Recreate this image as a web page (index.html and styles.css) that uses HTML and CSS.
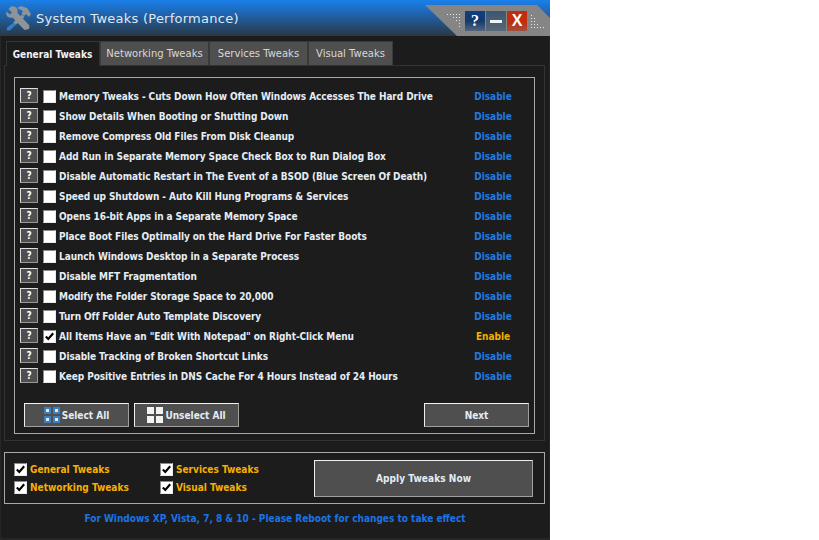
FILE: index.html
```html
<!DOCTYPE html>
<html lang="en">
<head>
<meta charset="utf-8">
<title>System Tweaks (Performance)</title>
<link rel="stylesheet" href="styles.css">
</head>
<body>
<div class="window">
  <header class="titlebar">
    <svg class="app-icon" width="26" height="26" viewBox="0 0 26 26">
      <path d="M6 1.5 L3.5 4 L7 7.5 L5 9.5 L1.5 6.5 Q0.5 10 3 12 Q5 13.2 7.5 12.5 L19.5 25 L24 24 L24.5 20.5 L12.5 8 Q13 4 10.5 2 Q8.5 1 6 1.5Z" fill="#8e9499"/>
      <path d="M12 3 L16 1 L22 3 L26 9 L24 12 L21 9 L19 11 L16.5 8.5 L18 6 Z" fill="#8e9499"/>
      <path d="M17 9.5 L19.5 12 L10.5 20 L8 17.5Z" fill="#8e9499"/>
      <path d="M9 17.5 L11 19.5 L5.5 25 Q3 26 2 25 Q1 23.5 2.5 22Z" fill="#2f7fc8"/>
    </svg>
    <span class="title">System Tweaks (Performance)</span>
    <svg class="chrome" width="127" height="36" viewBox="0 0 127 36">
      <path d="M2 5 H114 L127 18 V36 H34 Z" fill="#858585"/>
      <g fill="#e8e8e8">
        <rect x="24" y="14" width="1" height="1"/><rect x="27" y="14" width="1" height="1"/><rect x="30" y="14" width="1" height="1"/><rect x="33" y="14" width="1" height="1"/><rect x="36" y="14" width="1" height="1"/>
        <rect x="30" y="17" width="1" height="1"/><rect x="33" y="17" width="1" height="1"/><rect x="36" y="17" width="1" height="1"/>
        <rect x="33" y="20" width="1" height="1"/><rect x="36" y="20" width="1" height="1"/>
        <rect x="36" y="23" width="1" height="1"/><rect x="36" y="26" width="1" height="1"/>
        <rect x="108" y="15" width="1" height="1"/><rect x="108" y="18" width="1" height="1"/><rect x="111" y="18" width="1" height="1"/><rect x="108" y="21" width="1" height="1"/><rect x="111" y="21" width="1" height="1"/><rect x="108" y="24" width="1" height="1"/><rect x="111" y="24" width="1" height="1"/><rect x="114" y="24" width="1" height="1"/><rect x="108" y="27" width="1" height="1"/><rect x="111" y="27" width="1" height="1"/><rect x="114" y="27" width="1" height="1"/><rect x="117" y="27" width="1" height="1"/><rect x="120" y="27" width="1" height="1"/>
      </g>
    </svg>
    <div class="win-controls">
      <span class="win-btn win-help">?</span>
      <span class="win-btn win-min"><i class="min-bar"></i></span>
      <span class="win-btn win-close">X</span>
    </div>
  </header>

  <main class="content">
    <nav class="tabs">
      <span class="tab tab-active">General Tweaks</span>
      <span class="tab">Networking Tweaks</span>
      <span class="tab">Services Tweaks</span>
      <span class="tab">Visual Tweaks</span>
    </nav>
    <section class="panel">
      <div class="group">
        <ul class="rows">
          <li class="row"><span class="help">?</span><span class="check"></span><span class="label">Memory Tweaks - Cuts Down How Often Windows Accesses The Hard Drive</span><span class="state">Disable</span></li>
          <li class="row"><span class="help">?</span><span class="check"></span><span class="label">Show Details When Booting or Shutting Down</span><span class="state">Disable</span></li>
          <li class="row"><span class="help">?</span><span class="check"></span><span class="label">Remove Compress Old Files From Disk Cleanup</span><span class="state">Disable</span></li>
          <li class="row"><span class="help">?</span><span class="check"></span><span class="label">Add Run in Separate Memory Space Check Box to Run Dialog Box</span><span class="state">Disable</span></li>
          <li class="row"><span class="help">?</span><span class="check"></span><span class="label">Disable Automatic Restart in The Event of a BSOD (Blue Screen Of Death)</span><span class="state">Disable</span></li>
          <li class="row"><span class="help">?</span><span class="check"></span><span class="label">Speed up Shutdown - Auto Kill Hung Programs &amp; Services</span><span class="state">Disable</span></li>
          <li class="row"><span class="help">?</span><span class="check"></span><span class="label">Opens 16-bit Apps in a Separate Memory Space</span><span class="state">Disable</span></li>
          <li class="row"><span class="help">?</span><span class="check"></span><span class="label">Place Boot Files Optimally on the Hard Drive For Faster Boots</span><span class="state">Disable</span></li>
          <li class="row"><span class="help">?</span><span class="check"></span><span class="label">Launch Windows Desktop in a Separate Process</span><span class="state">Disable</span></li>
          <li class="row"><span class="help">?</span><span class="check"></span><span class="label">Disable MFT Fragmentation</span><span class="state">Disable</span></li>
          <li class="row"><span class="help">?</span><span class="check"></span><span class="label">Modify the Folder Storage Space to 20,000</span><span class="state">Disable</span></li>
          <li class="row"><span class="help">?</span><span class="check"></span><span class="label">Turn Off Folder Auto Template Discovery</span><span class="state">Disable</span></li>
          <li class="row"><span class="help">?</span><span class="check checked"><svg class="tick" width="9" height="9" viewBox="0 0 11 11"><path d="M1 5.5 L4 8.5 L10 1.5" fill="none" stroke="#000" stroke-width="2.6"/></svg></span><span class="label">All Items Have an "Edit With Notepad" on Right-Click Menu</span><span class="state state-on">Enable</span></li>
          <li class="row"><span class="help">?</span><span class="check"></span><span class="label">Disable Tracking of Broken Shortcut Links</span><span class="state">Disable</span></li>
          <li class="row"><span class="help">?</span><span class="check"></span><span class="label">Keep Positive Entries in DNS Cache For 4 Hours Instead of 24 Hours</span><span class="state">Disable</span></li>
        </ul>
        <div class="actions">
          <span class="btn"><svg class="grid-icon" width="16" height="16" viewBox="0 0 16 16"><path d="M0 0H7V7H0ZM9 0H16V7H9ZM0 9H7V16H0ZM9 9H16V16H9Z" fill="#3d7fbd"/><path d="M2 2H5V5H2ZM11 2H14V5H11ZM2 11H5V14H2ZM11 11H14V14H11Z" fill="#dce8f4"/></svg>Select All</span>
          <span class="btn"><svg class="grid-icon" width="16" height="16" viewBox="0 0 16 16"><path d="M0 0H7V7H0ZM9 0H16V7H9ZM0 9H7V16H0ZM9 9H16V16H9Z" fill="#f2f2f2"/></svg>Unselect All</span>
          <span class="btn btn-next">Next</span>
        </div>
      </div>
    </section>

    <section class="summary">
      <div class="summary-grid">
        <label class="sum-item"><span class="check checked"><svg class="tick" width="9" height="9" viewBox="0 0 11 11"><path d="M1 5.5 L4 8.5 L10 1.5" fill="none" stroke="#000" stroke-width="2.6"/></svg></span>General Tweaks</label>
        <label class="sum-item"><span class="check checked"><svg class="tick" width="9" height="9" viewBox="0 0 11 11"><path d="M1 5.5 L4 8.5 L10 1.5" fill="none" stroke="#000" stroke-width="2.6"/></svg></span>Services Tweaks</label>
        <label class="sum-item"><span class="check checked"><svg class="tick" width="9" height="9" viewBox="0 0 11 11"><path d="M1 5.5 L4 8.5 L10 1.5" fill="none" stroke="#000" stroke-width="2.6"/></svg></span>Networking Tweaks</label>
        <label class="sum-item"><span class="check checked"><svg class="tick" width="9" height="9" viewBox="0 0 11 11"><path d="M1 5.5 L4 8.5 L10 1.5" fill="none" stroke="#000" stroke-width="2.6"/></svg></span>Visual Tweaks</label>
      </div>
      <span class="btn btn-apply">Apply Tweaks Now</span>
    </section>

    <footer class="note">For Windows XP, Vista, 7, 8 &amp; 10 - Please Reboot for changes to take effect</footer>
  </main>
</div>
</body>
</html>
```
FILE: styles.css
```css
* { box-sizing: border-box; }
html, body { margin: 0; padding: 0; background: #fff; }
body { font-family: "DejaVu Sans", Verdana, sans-serif; font-stretch: condensed; }

.window { width: 550px; height: 540px; display: flex; flex-direction: column; background: #1c1c1c; }

.titlebar {
  position: relative; height: 36px; flex: none;
  display: flex; align-items: center; padding-left: 5px; gap: 5px;
  background: linear-gradient(#1a80ea 0%, #1f66b4 35%, #2a3745 100%);
}
.app-icon { flex: none; }
.title { font-size: 13px; color: #dfe9f2; letter-spacing: 0.25px; font-stretch: normal; }
.chrome { position: absolute; right: 0; top: 0; }
.win-controls { position: absolute; left: 465px; top: 11px; display: flex; gap: 1px; }
.win-btn { width: 20px; height: 20px; display: flex; align-items: center; justify-content: center; color: #fff; font-weight: bold; }
.win-help { background: linear-gradient(#0d3f80, #113a70 50%, #55657a); font-size: 16px; font-family: "Liberation Serif", serif; }
.win-min { background: linear-gradient(#3c5670, #576878); }
.min-bar { width: 12px; height: 3px; background: #f4f4f4; }
.win-close { background: linear-gradient(#c42a0a, #c0300e 60%, #a05040); font-size: 16px; font-family: "Liberation Sans", sans-serif; font-weight: bold; }

.content { flex: 1; display: flex; flex-direction: column; padding: 5px 4px 0; border-left: 1px solid #262626; border-right: 1px solid #262626; border-bottom: 2px solid #262626; }

.tabs { display: flex; height: 25px; padding-left: 1px; flex: none; position: relative; z-index: 1; margin-bottom: -1px; }
.tab {
  height: 24px; padding: 0 5px; display: flex; align-items: center; justify-content: center;
  background: #4f4f4f; color: #d8d8d8; font-size: 10px; font-stretch: normal;
  border: 1px solid #3a3a3a; border-bottom: 0;
}
.tab:nth-child(2) { width: 109px; }
.tab:nth-child(3) { width: 99px; }
.tab:nth-child(4) { width: 85px; }
.tab.tab-active { height: 25px; background: #1c1c1c; color: #f2f2f2; font-weight: bold; font-size: 10px; font-stretch: condensed; border-color: #333; width: 94px; padding: 0 1px 0 0; }

.panel { height: 376px; flex: none; border: 1px solid #333; padding: 11px 9px 7px; margin-left: -1px; }
.group { height: 357px; border: 1px solid #a8a8a8; padding: 9px 5px 5px; display: flex; flex-direction: column; }

.rows { list-style: none; margin: 0; padding: 0; }
.row { height: 20px; display: flex; align-items: center; padding-bottom: 3px; }
.help {
  width: 18px; height: 15px; margin-right: 5px; flex: none;
  background: #4f4f4f; border: 1px solid; border-color: #e0e0e0 #999 #999 #e0e0e0;
  color: #fff; font-size: 10px; font-weight: bold; display: flex; align-items: center; justify-content: center;
}
.check {
  width: 13px; height: 13px; flex: none; background: #fff;
  border: 1px solid; border-color: #8a8a8a #e8e8e8 #e8e8e8 #8a8a8a;
  display: flex; align-items: center; justify-content: center;
  margin-right: 3px;
}
.row .check { margin-top: 2px; }
.tick { flex: none; }
.label { flex: 1; font-size: 10px; font-weight: bold; color: #e4ecf4; white-space: nowrap; letter-spacing: -0.08px; margin-top: 1px; }
.state { width: 54px; font-size: 10px; font-weight: bold; color: #1f7ae0; text-align: center; margin-right: 9px; margin-top: 1px; }
.state-on { color: #f0b000; }

.actions { margin-top: 16px; padding: 0 0 0 4px; display: flex; gap: 5px; }
.btn {
  height: 24px; width: 105px; flex: none;
  display: flex; align-items: center; justify-content: center; gap: 2px;
  background: #4f4f4f; border: 1px solid; border-color: #f0f0f0 #a0a0a0 #a0a0a0 #f0f0f0;
  color: #e4ecf4; font-size: 10px; font-weight: bold;
}
.btn-next { margin-left: auto; }

.summary {
  margin-top: 11px; height: 52px; flex: none; margin-left: -1px;
  border: 1px solid #a8a8a8; padding: 7px 11px 0 9px;
  display: flex; justify-content: space-between; align-items: flex-start;
}
.summary-grid { display: grid; grid-template-columns: 146px 146px; grid-auto-rows: 18px; }
.sum-item { display: flex; align-items: center; color: #f5b000; font-size: 10px; font-weight: bold; }
.btn-apply { width: 219px; height: 37px; letter-spacing: 0.08px; }

.note { flex: 1; display: flex; align-items: center; justify-content: center; color: #1a74e6; font-size: 10px; font-weight: bold; padding-bottom: 5px; }
```
